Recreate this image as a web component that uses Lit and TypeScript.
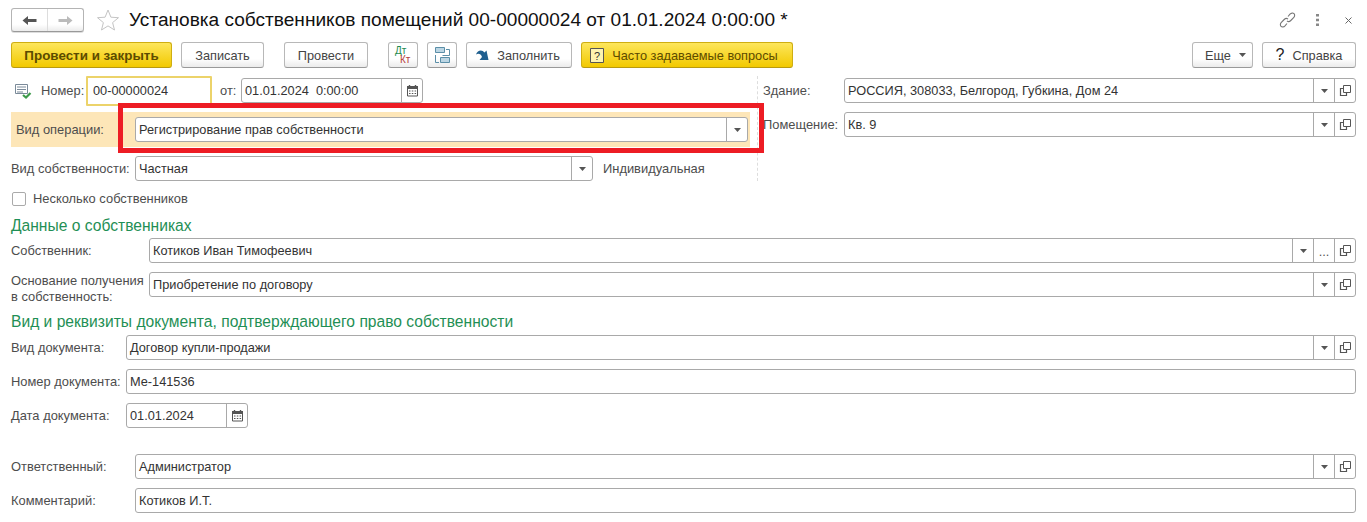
import { LitElement, html, css } from "lit";
import { customElement } from "lit/decorators.js";

const calIcon = html`<svg width="13" height="13" viewBox="0 0 13 13"><path d="M1.5 2.5h10v9.500h-10z" fill="#fff" stroke="#555"/><path d="M1 2h11v3H1z" fill="#555"/><path d="M3.500 1v2M9.500 1v2" stroke="#555" stroke-width="1.400"/><path d="M3 6.500h1.500v1H3zM5.800 6.500h1.500v1H5.800zM8.600 6.500h1.500v1H8.600zM3 9h1.500v1H3zM5.800 9h1.500v1H5.800zM8.600 9h1.500v1H8.600z" fill="#555"/></svg>`;
const caret = html`<svg width="7" height="4" viewBox="0 0 7 4"><path d="M0 0h7L3.500 4z" fill="#555"/></svg>`;
const openIcon = html`<svg width="13" height="13" viewBox="0 0 13 13" fill="none" stroke="#555"><path d="M4.500 1.500h7v7h-7z"/><path d="M4.500 4.500h-3v7h6v-3" stroke-width="1.200"/></svg>`;
const dots = html`<span class="dots">...</span>`;

type Seg = "drop" | "more" | "open" | "cal";

function segs(list: Seg[]) {
  return list.map((s) => html`<span class="seg">${s === "drop" ? caret : s === "open" ? openIcon : s === "cal" ? calIcon : dots}</span>`);
}

function field(value: string, cls: string, list: Seg[] = []) {
  return html`<div class="field ${cls}"><span class="val">${value}</span>${segs(list)}</div>`;
}

@customElement("app-root")
export class AppRoot extends LitElement {
  static styles = css`
    :host { display: block; width: 1367px; height: 522px; background: #fff; overflow: hidden; position: relative;
      font-family: "Liberation Sans", Arial, sans-serif; font-size: 12.750px; color: #333; }
    * { box-sizing: border-box; }
    .head { height: 42px; display: flex; align-items: flex-start; padding: 8px 11px 0; }
    .nav { width: 73px; height: 24px; display: flex; border: 1px solid #b4b4b4; border-radius: 3px; border-bottom-color: #999;
      background: linear-gradient(#fff 70%, #ececec); box-shadow: 0 1px 0 #ddd; }
    .nav span { display: flex; align-items: center; justify-content: center; }
    .nav span:first-child { width: 36px; border-right: 1px solid #ddd; }
    .nav span:last-child { flex: 1; }
    .star { margin: 1px 0 0 13px; width: 22px; height: 22px; display: block; }
    .title { margin: 0 0 0 10px; font-size: 19.080px; font-weight: 400; color: #111; line-height: 23px; white-space: nowrap; }
    .head-right { margin-left: auto; display: flex; align-items: center; height: 24px; padding-right: 4px; }
    .head-right svg { display: block; }
    .link-ic { margin-right: 20px; }
    .more-ic { margin-right: 26px; }
    .bar { height: 26px; display: flex; gap: 9px; padding: 0 11px; }
    .btn { height: 26px; display: flex; align-items: center; justify-content: center; gap: 8px; border: 1px solid #b8b8b8; border-bottom-color: #999;
      border-radius: 3px; background: linear-gradient(#fff 65%, #ebebeb); color: #444; white-space: nowrap; }
    .btn.yellow { background: linear-gradient(#fde65c, #f2c900); border-color: #cfae12; border-bottom-color: #b89a10; color: #5c4b00; }
    .btn.bold { font-weight: 700; font-size: 13.400px; }
    .gap-l { margin-left: 11px; }
    .w161 { width: 161px; } .w83 { width: 83px; } .w84 { width: 84px; } .w30 { width: 30px; } .w106 { width: 106px; padding-right: 2px; }
    .w212 { width: 212px; padding-right: 6px; } .w61 { width: 61px; padding-left: 6px; } .w94 { width: 94px; }
    .spacer { flex: 1; }
    .q { font-size: 16px; font-weight: 400; color: #222; }
    .dk { position: relative; width: 24px; height: 20px; font-size: 10px; line-height: 9px; }
    .dk i { position: absolute; font-style: normal; }
    .dk i:first-child { left: 4px; top: 1px; color: #1e8a50; }
    .dk i:last-child { left: 9px; top: 10px; color: #b5413c; }
    .top { display: flex; margin-top: 8px; padding-left: 11px; }
    .left { width: 747px; padding-right: 7px; border-right: 1px dashed #ddd; }
    .right { flex: 1; padding: 2px 11px 0 5px; }
    .row { display: flex; align-items: center; }
    .r1 { height: 29px; }
    .band { height: 35px; margin-top: 7px; background: #fde6b8; padding: 0 2px 0 5px; }
    .r3 { height: 25px; margin-top: 9px; }
    .label { color: #4d4d4d; white-space: nowrap; flex: none; line-height: 14px; font-size: 12.900px; }
    .l124 { width: 124px; } .l119 { width: 119px; } .l138 { width: 138px; } .l115 { width: 115px; } .l81 { width: 81px; }
    .l45 { width: 45px; }
    .two { height: 25px; line-height: 16px; padding-top: 1px; align-self: flex-start; }
    .doc-ic { width: 18px; height: 16px; margin: 0 9px 0 3px; display: block; flex: none; }
    .field { height: 25px; display: flex; border: 1px solid #a9a9a9; border-radius: 3px; background: #fff; }
    .val { flex: 1; padding-left: 3px; line-height: 23px; color: #333; white-space: pre; overflow: hidden; }
    .seg { width: 21px; flex: none; display: flex; align-items: center; justify-content: center; border-left: 1px solid #a9a9a9; }
    .dots { color: #555; line-height: 10px; margin-top: 2px; }
    .grow { flex: 1; }
    .num { width: 126px; height: 30px; border: 2px solid #ecd36a; display: flex; align-items: center; padding-left: 5px; border-radius: 1px; color: #333; }
    .ot { margin-left: 8px; width: 21px; }
    .f182 { width: 182px; } .f458 { width: 458px; } .f122 { width: 122px; }
    .note { margin-left: 10px; color: #4d4d4d; font-size: 12.900px; }
    .rgap { margin-top: 9px; }
    .check { margin-top: 10px; height: 15px; display: flex; align-items: center; padding-left: 12px; color: #4d4d4d; font-size: 12.900px; }
    .box { width: 14px; height: 14px; border: 1px solid #aaa; border-radius: 2px; margin-right: 7px; background: #fff; }
    .lower { padding: 0 11px; }
    h2 { margin: 0; font-size: 15.620px; font-weight: 400; color: #1f8f55; line-height: 20px; white-space: nowrap; }
    .h1 { margin-top: 10px; } .h2 { margin-top: 15px; }
    .m2 { margin-top: 2px; } .m4 { margin-top: 3px; } .m26 { margin-top: 26px; }
    .mark { position: absolute; left: 118px; top: 103px; width: 646px; height: 50px; border: 5px solid #ed1c24; pointer-events: none; }
  `;

  render() {
    return html`
      <div class="head">
        <div class="nav">
          <span><svg width="15" height="11" viewBox="0 0 15 11"><path d="M0.500 5.500 6 1v3h8.500v3H6v3z" fill="#555"/></svg></span>
          <span><svg width="15" height="11" viewBox="0 0 15 11"><path d="M14.500 5.500 9 1v3H.5v3H9v3z" fill="#bbb"/></svg></span>
        </div>
        <svg class="star" viewBox="0 0 22 22"><path d="M11 1l2.900 7.200 7.600.5-5.900 4.900 1.900 7.400L11 16.900 4.500 21l1.900-7.400L.5 8.700l7.600-.5z" fill="#fff" stroke="#c4c4c4"/></svg>
        <h1 class="title">Установка собственников помещений 00-00000024 от 01.01.2024 0:00:00 *</h1>
        <div class="head-right">
          <svg class="link-ic" width="17" height="16" viewBox="0 0 17 16" fill="none" stroke="#777" stroke-width="1.100"><path d="M9 4.500l2-2.300c1.200-1.300 3-1.500 4-.5s.8 2.800-.4 4l-2.800 2.800c-1.200 1.200-2.800 1.300-3.800.4"/><path d="M8 11.500l-2 2.300c-1.200 1.300-3 1.500-4 .5s-.8-2.800.4-4l2.800-2.800c1.200-1.200 2.800-1.300 3.800-.4"/></svg>
          <svg class="more-ic" width="3" height="12" viewBox="0 0 3 12" fill="#888"><path d="M0 0h3v2.500H0zM0 4.700h3v2.500H0zM0 9.500h3V12H0z"/></svg>
          <svg width="7" height="7" viewBox="0 0 7 7" stroke="#666" stroke-width="1"><path d="M.5.500l6 6M6.500.5l-6 6"/></svg>
        </div>
      </div>

      <div class="bar">
        <div class="btn yellow bold w161">Провести и закрыть</div>
        <div class="btn w83">Записать</div>
        <div class="btn w84 gap-l">Провести</div>
        <div class="btn w30 gap-l"><span class="dk"><i>Дт</i><i>Кт</i></span></div>
        <div class="btn w30"><svg width="15" height="16" viewBox="0 0 15 16" fill="none" stroke="#5b8fa8"><path d="M.5.500h9v5h-9z" fill="#bcd6e4"/><path d="M5.500 10.500h9v5h-9z" fill="#bcd6e4"/><path d="M11 2.500h3.500v6H7.500M.5 8v7.500H4"/></svg></div>
        <div class="btn w106"><svg width="13" height="13" viewBox="0 0 13 13"><path d="M0 5.500C1.500 1 6 0 8.500 3.500L10.500 1.500 12.500 11H3.500L6 8C5 5 2.500 4 0 5.500z" fill="#1f5f8f"/></svg><span>Заполнить</span></div>
        <div class="btn yellow w212"><svg width="14" height="15" viewBox="0 0 14 15"><path d="M.5.500h13v14H.5z" fill="#fdf3b0" stroke="#555"/><text x="7" y="12" font-size="11" font-family="Liberation Sans" text-anchor="middle" fill="#333">?</text></svg><span>Часто задаваемые вопросы</span></div>
        <div class="spacer"></div>
        <div class="btn w61">Еще ${caret}</div>
        <div class="btn w94"><span class="q">?</span><span>Справка</span></div>
      </div>

      <div class="top">
        <div class="left">
          <div class="row r1">
            <svg class="doc-ic" viewBox="0 0 18 16" fill="none"><path d="M1.500 1.500h12v9h-12z" stroke="#7a8a99" fill="#fff"/><path d="M3 4h9M3 6.500h9M3 9h6" stroke="#7a8a99"/><path d="M9 12l3 2.500 4.500-4.500" stroke="#3c9a4a" stroke-width="2.200"/></svg>
            <span class="label l45">Номер:</span>
            <div class="num">00-00000024</div>
            <span class="label ot">от:</span>
            ${field("01.01.2024  0:00:00", "f182", ["cal"])}
          </div>
          <div class="row band">
            <span class="label l119">Вид операции:</span>
            ${field("Регистрирование прав собственности", "grow", ["drop"])}
          </div>
          <div class="row r3">
            <span class="label l124">Вид собственности:</span>
            ${field("Частная", "f458", ["drop"])}
            <span class="note">Индивидуальная</span>
          </div>
        </div>
        <div class="right">
          <div class="row">
            <span class="label l81">Здание:</span>
            ${field("РОССИЯ, 308033, Белгород, Губкина, Дом 24", "grow", ["drop", "open"])}
          </div>
          <div class="row rgap">
            <span class="label l81">Помещение:</span>
            ${field("Кв. 9", "grow", ["drop", "open"])}
          </div>
        </div>
      </div>

      <div class="check"><span class="box"></span>Несколько собственников</div>

      <div class="lower">
        <h2 class="h1">Данные о собственниках</h2>
        <div class="row m2">
          <span class="label l138">Собственник:</span>
          ${field("Котиков Иван Тимофеевич", "grow", ["drop", "more", "open"])}
        </div>
        <div class="row rgap">
          <span class="label l138 two">Основание получения<br />в собственность:</span>
          ${field("Приобретение по договору", "grow", ["drop", "open"])}
        </div>
        <h2 class="h2">Вид и реквизиты документа, подтверждающего право собственности</h2>
        <div class="row m4">
          <span class="label l115">Вид документа:</span>
          ${field("Договор купли-продажи", "grow", ["drop", "open"])}
        </div>
        <div class="row rgap">
          <span class="label l115">Номер документа:</span>
          ${field("Ме-141536", "grow")}
        </div>
        <div class="row rgap">
          <span class="label l115">Дата документа:</span>
          ${field("01.01.2024", "f122", ["cal"])}
        </div>
        <div class="row m26">
          <span class="label l124">Ответственный:</span>
          ${field("Администратор", "grow", ["drop", "open"])}
        </div>
        <div class="row rgap">
          <span class="label l124">Комментарий:</span>
          ${field("Котиков И.Т.", "grow")}
        </div>
      </div>

      <div class="mark"></div>
    `;
  }
}
